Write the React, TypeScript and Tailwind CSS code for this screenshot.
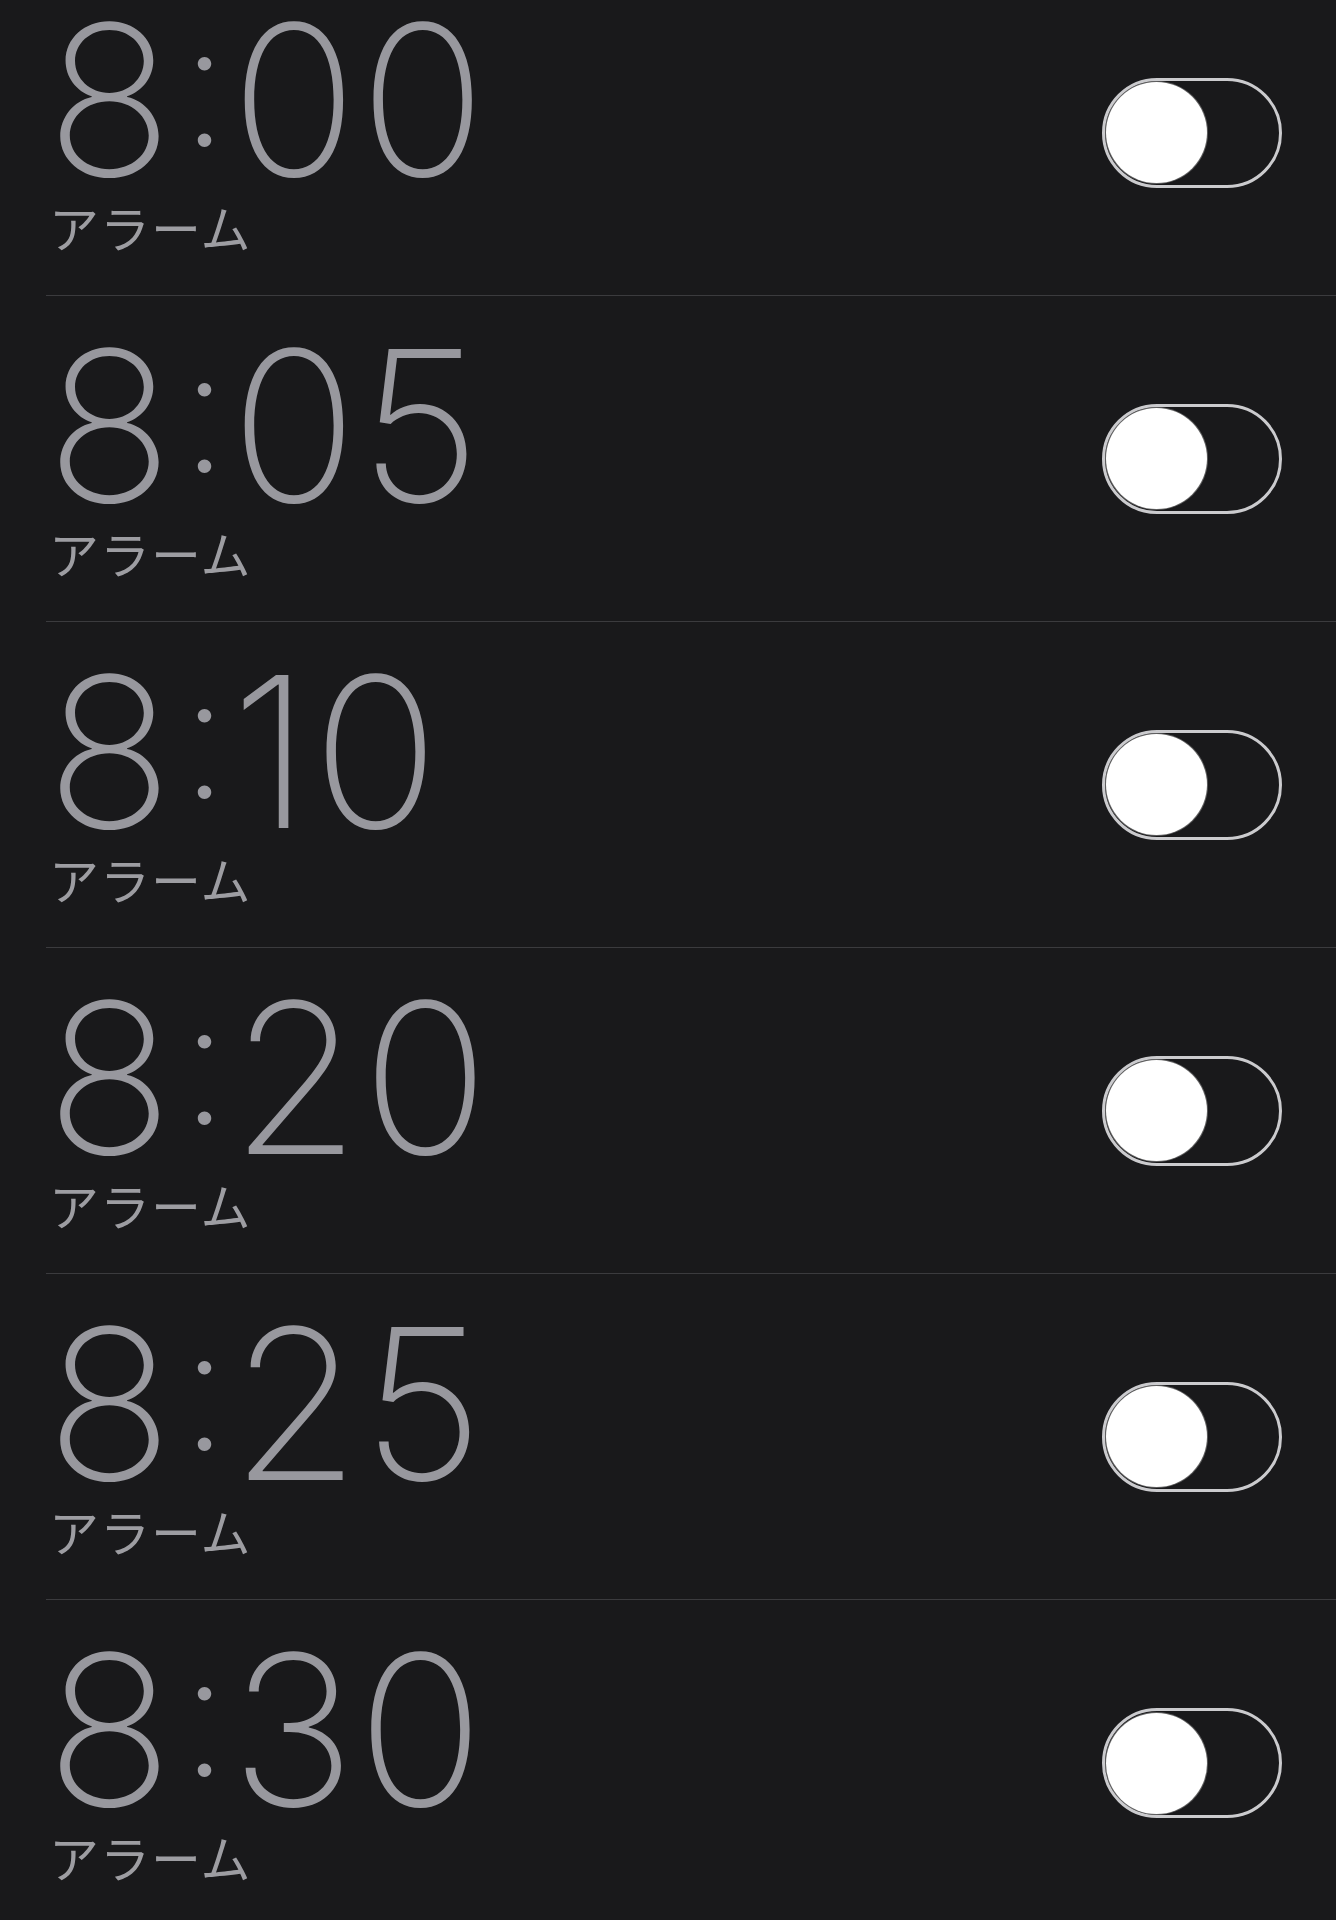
import React from 'react';

const alarms = ['8:00', '8:05', '8:10', '8:20', '8:25', '8:30'];

const Toggle: React.FC = () => (
  <div className="w-[180px] h-[110px] rounded-full border-[3px] border-[#cbcbce] flex items-center pl-[1px]">
    <div className="w-[101px] h-[101px] rounded-full bg-white shadow-[0_0_0_1px_rgba(140,140,140,0.6)]" />
  </div>
);

const Time: React.FC<{ value: string }> = ({ value }) => {
  const [h, m] = value.split(':');
  return (
    <div
      className="text-[210px] leading-none font-[150] text-[#98989e] -mt-[20px] whitespace-nowrap tracking-[2px]"
      style={{ fontFamily: 'Inter, Roboto, sans-serif' }}
    >
      {h}
      <span className="relative bottom-[30px] text-[172px] ml-[6px] mr-[0px]">:</span>
      {m}
    </div>
  );
};

const AlarmRow: React.FC<{ time: string; last: boolean }> = ({ time, last }) => (
  <div className="pl-[46px]">
    <div
      className={`h-[326px] pr-[54px] flex items-center justify-between ${
        last ? '' : 'border-b border-[#3b3b3e]'
      }`}
    >
      <div className="flex flex-col">
        <Time value={time} />
        <div
          className="text-[50px] leading-none text-[#9d9da2] font-normal -mt-[4px] pl-[3px] tracking-[1px]"
          style={{ fontFamily: '"Noto Sans CJK JP", sans-serif' }}
        >
          アラーム
        </div>
      </div>
      <Toggle />
    </div>
  </div>
);

const App: React.FC = () => {
  return (
    <div className="w-[1336px] h-[1920px] overflow-hidden bg-[#19191b]">
      <div className="-mt-[30px]">
        {alarms.map((t, i) => (
          <AlarmRow key={t} time={t} last={i === alarms.length - 1} />
        ))}
      </div>
    </div>
  );
};

export default App;
